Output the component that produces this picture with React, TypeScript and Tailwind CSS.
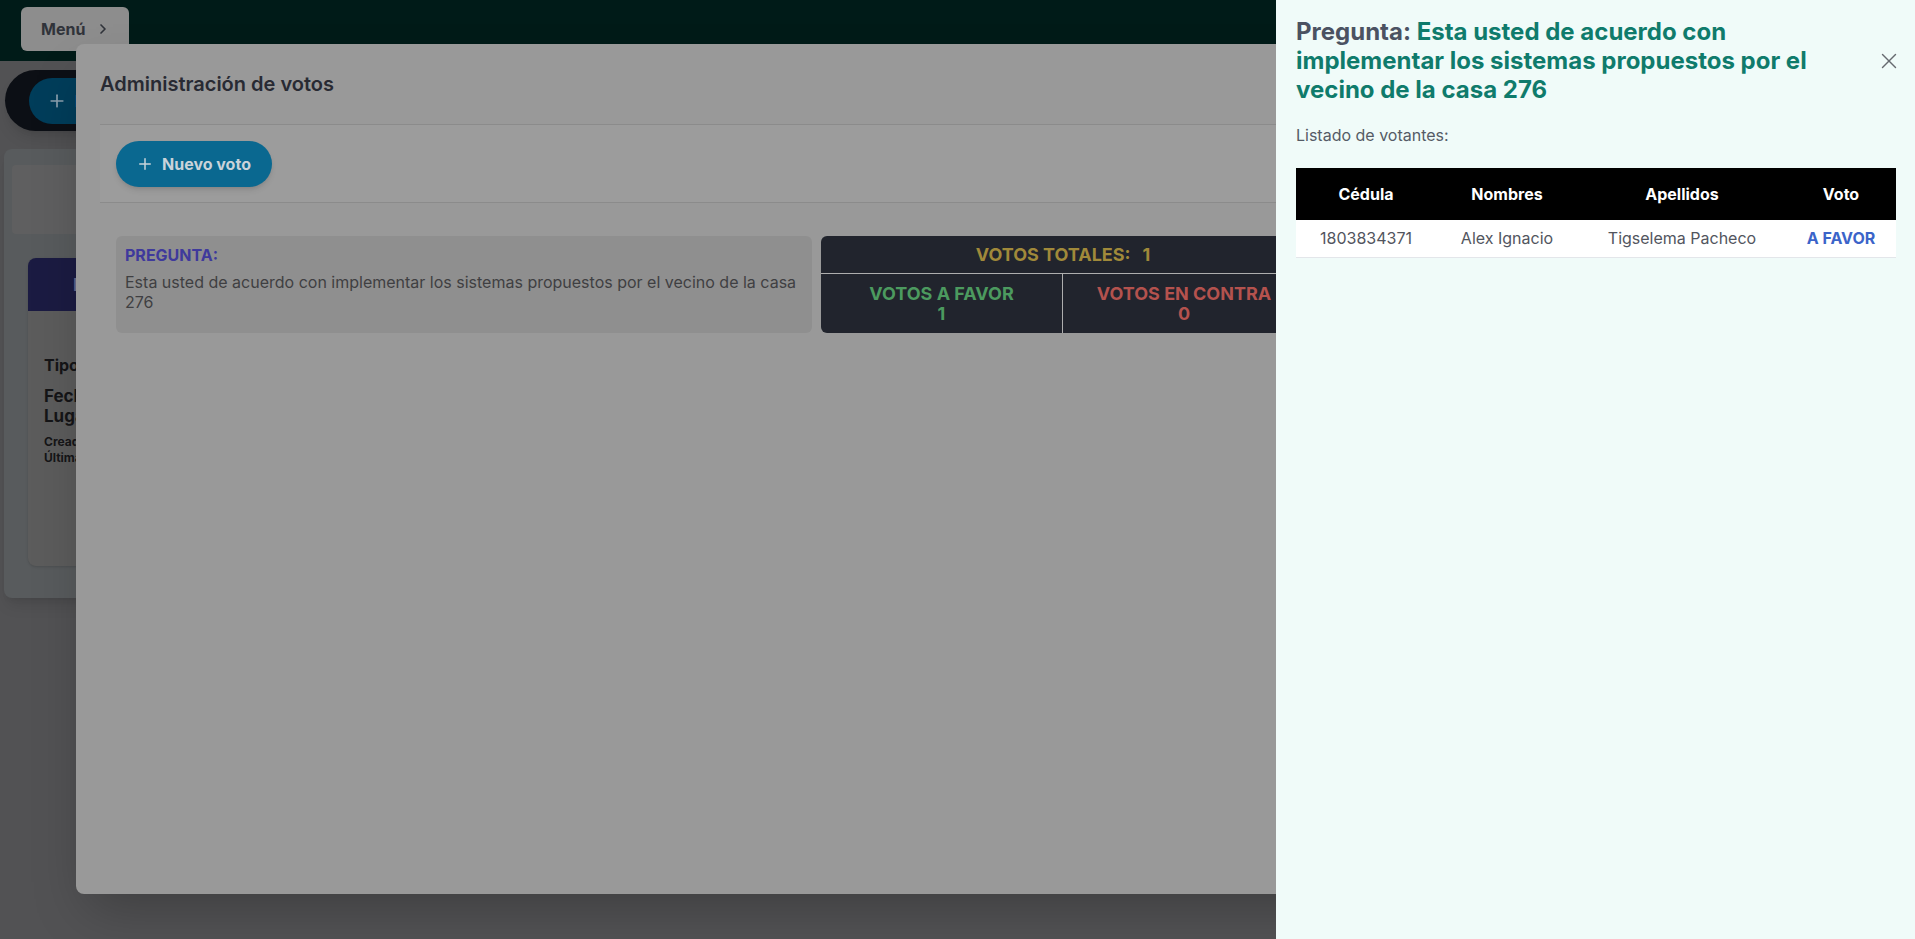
import { X, Plus, ChevronRight } from "lucide-react";

export default function App() {
  return (
    <div className="relative h-[939px] w-[1915px] overflow-hidden bg-[#525254] font-['Inter',sans-serif]">
      {/* Background page */}
      <header className="flex h-[61px] items-start bg-[#001b18] pl-[21px] pt-[7px]">
        <button className="flex h-[44px] w-[108px] items-center gap-[10px] rounded-md bg-[#8d8d8d] pl-[20px] text-[16px] font-bold text-[#30333a]">
          Menú
          <ChevronRight className="h-[16px] w-[16px]" strokeWidth={2.5} />
        </button>
      </header>
      <main className="px-[4px] pt-[9px]">
        <div className="ml-[1px] flex h-[61px] w-[320px] items-center rounded-full bg-[#0c0f15] pl-[24px] shadow-lg">
          <div className="flex h-[46px] items-center gap-[8px] rounded-full bg-[#003d5a] pl-[18px] pr-[24px] text-[16px] font-bold text-[#8a9fad]">
            <Plus className="h-[20px] w-[20px]" strokeWidth={2} />
            Nuevo
          </div>
        </div>
        <div className="mt-[18px] h-[449px] w-[400px] rounded-lg bg-[#585b5d] px-[8px] pt-[16px] shadow-lg">
          <div className="h-[69px] rounded bg-[#5f5f60]" />
          <div className="ml-[16px] mt-[24px] h-[308px] overflow-hidden rounded-lg bg-[#5c5c5c] shadow">
            <div className="flex h-[53px] items-center bg-[#1b1b42] pl-[45px] text-[18px] font-bold text-[#6a6a8c]">
              Evento
            </div>
            <div className="px-[16px] pt-[44px] text-[#151517]">
              <p className="text-[16px] font-bold leading-[20px]">Tipo</p>
              <p className="mt-[11px] text-[17px] font-bold leading-[20px]">Fecha</p>
              <p className="text-[17px] font-bold leading-[20px]">Lugar</p>
              <p className="mt-[8px] text-[12px] font-bold leading-[16px]">Creado</p>
              <p className="text-[12px] font-bold leading-[16px]">Última</p>
            </div>
          </div>
        </div>
      </main>

      {/* Modal */}
      <div className="absolute left-[76px] top-[44px] h-[850px] w-[1763px] rounded-lg bg-[#999999] shadow-2xl">
        <div className="flex h-[80px] items-center px-[24px]">
          <h1 className="text-[20px] font-semibold text-[#282a33]">Administración de votos</h1>
        </div>
        <div className="mx-[24px] flex h-[79px] items-center border-y border-[#8b8b8b] bg-[#9c9c9c] px-[16px]">
          <button className="flex h-[46px] items-center gap-[8px] rounded-full bg-[#0a6890] pl-[20px] pr-[21px] text-[16px] font-bold text-[#c9d3da] shadow-md">
            <Plus className="h-[18px] w-[18px]" strokeWidth={2} />
            Nuevo voto
          </button>
        </div>
        <div className="flex gap-[9px] px-[40px] pt-[33px]">
          <div className="h-[97px] w-[696px] rounded-md bg-[#8f8f8f] px-[9px] pt-[9px]">
            <p className="text-[16px] font-bold leading-[20px] text-[#3f3a9c]">PREGUNTA:</p>
            <p className="mt-[7px] text-[16px] leading-[20px] text-[#3f3f42]">
              Esta usted de acuerdo con implementar los sistemas propuestos por el vecino de la casa 276
            </p>
          </div>
          <div className="flex h-[97px] w-[484px] flex-col overflow-hidden rounded-md bg-[#21242d] font-bold">
            <div className="flex h-[38px] items-center justify-center border-b border-[#aeaeae] text-[18px] text-[#a0893a]">
              VOTOS TOTALES:
              <span className="ml-[12px]">1</span>
            </div>
            <div className="grid flex-1 grid-cols-2">
              <div className="flex flex-col items-center justify-center border-r border-[#aeaeae] text-[18px] leading-[20px] text-[#4c9a5f]">
                <span>VOTOS A FAVOR</span>
                <span>1</span>
              </div>
              <div className="flex flex-col items-center justify-center text-[18px] leading-[20px] text-[#b4524e]">
                <span>VOTOS EN CONTRA</span>
                <span>0</span>
              </div>
            </div>
          </div>
        </div>
      </div>

      {/* Drawer */}
      <aside className="absolute right-0 top-0 h-full w-[639px] bg-[#f0fbf9] pl-[20px] pr-[19px] pt-[17px]">
        <div className="flex items-center justify-between">
          <h2 className="w-[540px] text-[24px] font-bold leading-[29px] text-[#4b5262]">
            Pregunta: <span className="text-[#0f7b6c]">Esta usted de acuerdo con implementar los sistemas propuestos por el vecino de la casa 276</span>
          </h2>
          <X className="-mr-[6px] h-[26px] w-[26px] text-[#666a70]" strokeWidth={1.3} />
        </div>
        <p className="mt-[20px] text-[16px] leading-[22px] text-[#555b66]">Listado de votantes:</p>
        <table className="mt-[22px] w-[600px] table-fixed border-collapse">
          <thead>
            <tr className="h-[52px] bg-black text-[16px] font-bold text-white">
              <th className="w-[140px] text-center">Cédula</th>
              <th className="w-[142px] text-center">Nombres</th>
              <th className="w-[208px] text-center">Apellidos</th>
              <th className="w-[110px] text-center">Voto</th>
            </tr>
          </thead>
          <tbody>
            <tr className="h-[37px] border-b border-[#e3e6ea] bg-white text-[16px] text-[#52555e]">
              <td className="text-center">1803834371</td>
              <td className="text-center">Alex Ignacio</td>
              <td className="text-center">Tigselema Pacheco</td>
              <td className="text-center font-bold text-[#3b64c9]">A FAVOR</td>
            </tr>
          </tbody>
        </table>
      </aside>
    </div>
  );
}
